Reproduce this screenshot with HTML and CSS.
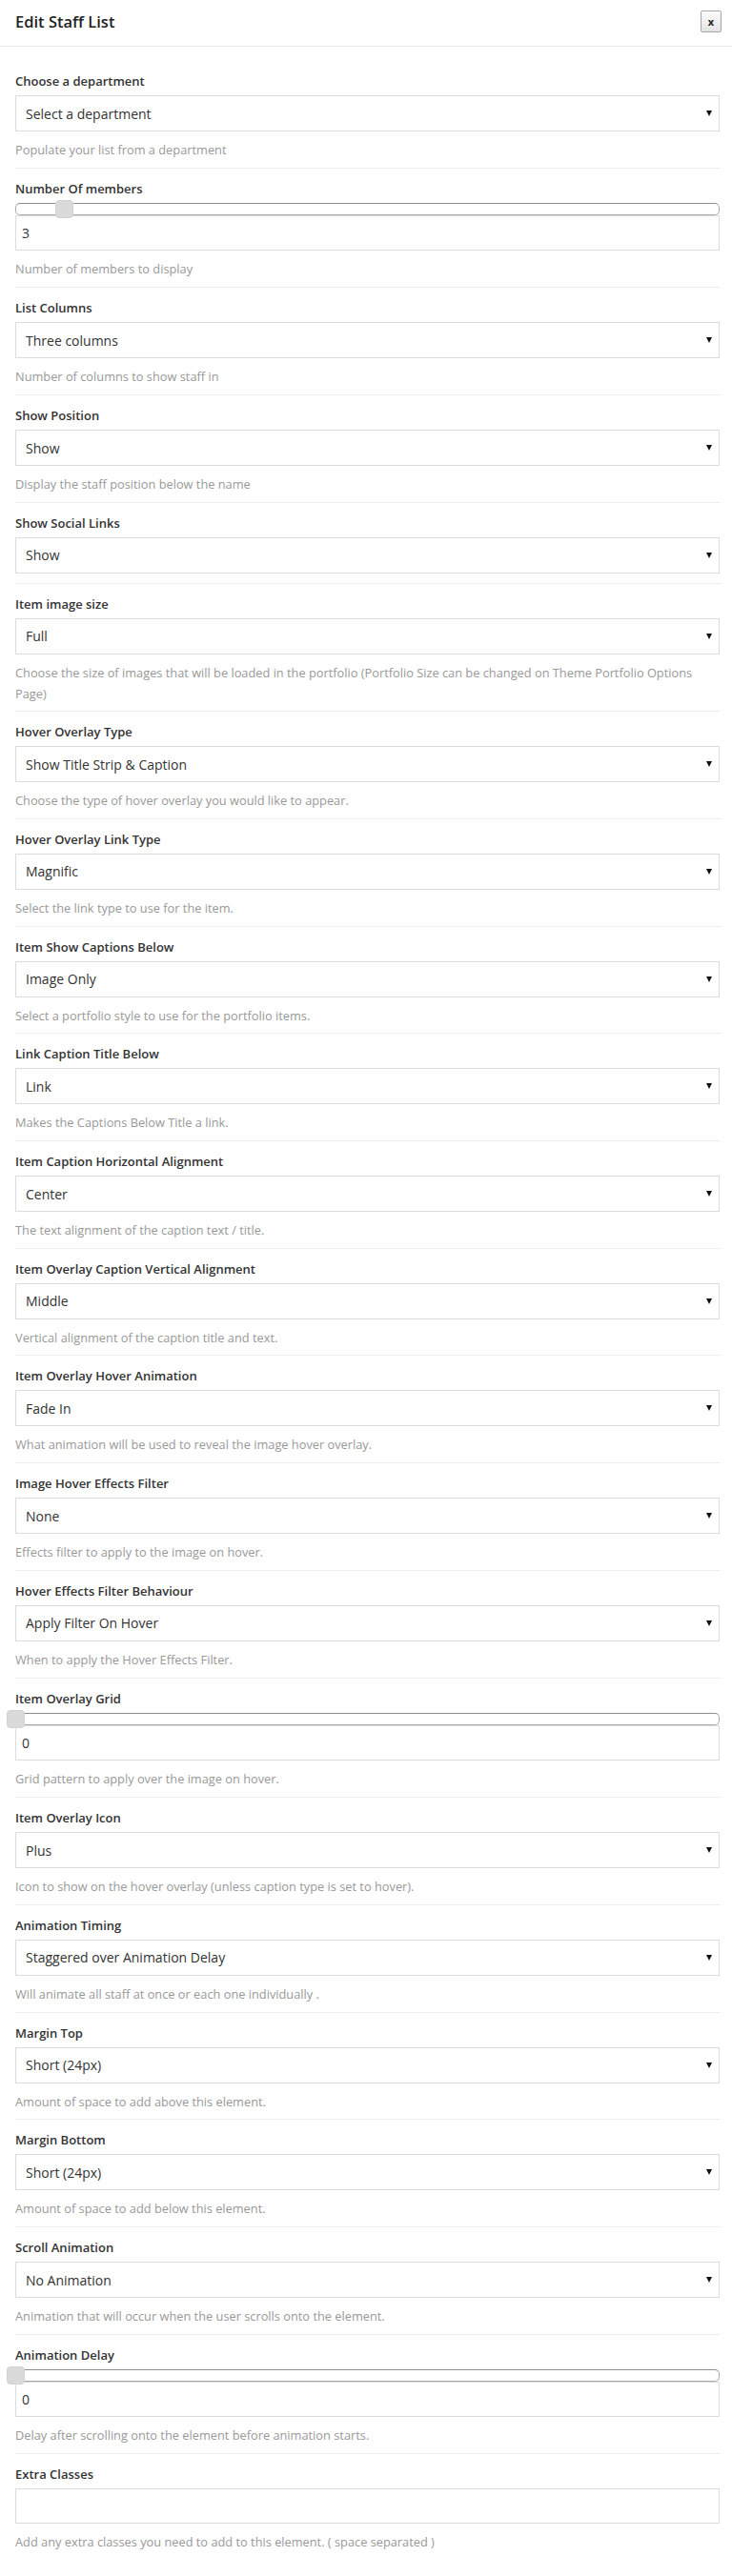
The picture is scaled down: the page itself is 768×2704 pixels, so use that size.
FILE: index.html
```html
<!DOCTYPE html>
<html lang="en">
<head>
<meta charset="utf-8">
<title>Edit Staff List</title>
<link rel="stylesheet" href="styles.css">
</head>
<body>
<div class="modal">
  <div class="modal-header">
    <h1 class="modal-title">Edit Staff List</h1>
    <button class="close-btn" type="button">x</button>
  </div>
  <form class="modal-body">
    <div class="field">
      <label class="field-label">Choose a department</label>
      <div class="select-wrap"><select class="select"><option>Select a department</option></select></div>
      <p class="help">Populate your list from a department</p>
    </div>
    <div class="field field-slider">
      <label class="field-label">Number Of members</label>
      <div class="slider"><span class="slider-thumb" style="left: 6.9%"></span></div>
      <input class="text-input" type="text" value="3">
      <p class="help">Number of members to display</p>
    </div>
    <div class="field">
      <label class="field-label">List Columns</label>
      <div class="select-wrap"><select class="select"><option>Three columns</option></select></div>
      <p class="help">Number of columns to show staff in</p>
    </div>
    <div class="field">
      <label class="field-label">Show Position</label>
      <div class="select-wrap"><select class="select"><option>Show</option></select></div>
      <p class="help">Display the staff position below the name</p>
    </div>
    <div class="field field-nohelp">
      <label class="field-label">Show Social Links</label>
      <div class="select-wrap"><select class="select"><option>Show</option></select></div>
    </div>
    <div class="field">
      <label class="field-label">Item image size</label>
      <div class="select-wrap"><select class="select"><option>Full</option></select></div>
      <p class="help">Choose the size of images that will be loaded in the portfolio (Portfolio Size can be changed on Theme Portfolio Options Page)</p>
    </div>
    <div class="field">
      <label class="field-label">Hover Overlay Type</label>
      <div class="select-wrap"><select class="select"><option>Show Title Strip &amp; Caption</option></select></div>
      <p class="help">Choose the type of hover overlay you would like to appear.</p>
    </div>
    <div class="field">
      <label class="field-label">Hover Overlay Link Type</label>
      <div class="select-wrap"><select class="select"><option>Magnific</option></select></div>
      <p class="help">Select the link type to use for the item.</p>
    </div>
    <div class="field">
      <label class="field-label">Item Show Captions Below</label>
      <div class="select-wrap"><select class="select"><option>Image Only</option></select></div>
      <p class="help">Select a portfolio style to use for the portfolio items.</p>
    </div>
    <div class="field">
      <label class="field-label">Link Caption Title Below</label>
      <div class="select-wrap"><select class="select"><option>Link</option></select></div>
      <p class="help">Makes the Captions Below Title a link.</p>
    </div>
    <div class="field">
      <label class="field-label">Item Caption Horizontal Alignment</label>
      <div class="select-wrap"><select class="select"><option>Center</option></select></div>
      <p class="help">The text alignment of the caption text / title.</p>
    </div>
    <div class="field">
      <label class="field-label">Item Overlay Caption Vertical Alignment</label>
      <div class="select-wrap"><select class="select"><option>Middle</option></select></div>
      <p class="help">Vertical alignment of the caption title and text.</p>
    </div>
    <div class="field">
      <label class="field-label">Item Overlay Hover Animation</label>
      <div class="select-wrap"><select class="select"><option>Fade In</option></select></div>
      <p class="help">What animation will be used to reveal the image hover overlay.</p>
    </div>
    <div class="field">
      <label class="field-label">Image Hover Effects Filter</label>
      <div class="select-wrap"><select class="select"><option>None</option></select></div>
      <p class="help">Effects filter to apply to the image on hover.</p>
    </div>
    <div class="field">
      <label class="field-label">Hover Effects Filter Behaviour</label>
      <div class="select-wrap"><select class="select"><option>Apply Filter On Hover</option></select></div>
      <p class="help">When to apply the Hover Effects Filter.</p>
    </div>
    <div class="field field-slider">
      <label class="field-label">Item Overlay Grid</label>
      <div class="slider"><span class="slider-thumb" style="left: 0%"></span></div>
      <input class="text-input" type="text" value="0">
      <p class="help">Grid pattern to apply over the image on hover.</p>
    </div>
    <div class="field">
      <label class="field-label">Item Overlay Icon</label>
      <div class="select-wrap"><select class="select"><option>Plus</option></select></div>
      <p class="help">Icon to show on the hover overlay (unless caption type is set to hover).</p>
    </div>
    <div class="field">
      <label class="field-label">Animation Timing</label>
      <div class="select-wrap"><select class="select"><option>Staggered over Animation Delay</option></select></div>
      <p class="help">Will animate all staff at once or each one individually .</p>
    </div>
    <div class="field">
      <label class="field-label">Margin Top</label>
      <div class="select-wrap"><select class="select"><option>Short (24px)</option></select></div>
      <p class="help">Amount of space to add above this element.</p>
    </div>
    <div class="field">
      <label class="field-label">Margin Bottom</label>
      <div class="select-wrap"><select class="select"><option>Short (24px)</option></select></div>
      <p class="help">Amount of space to add below this element.</p>
    </div>
    <div class="field">
      <label class="field-label">Scroll Animation</label>
      <div class="select-wrap"><select class="select"><option>No Animation</option></select></div>
      <p class="help">Animation that will occur when the user scrolls onto the element.</p>
    </div>
    <div class="field field-slider">
      <label class="field-label">Animation Delay</label>
      <div class="slider"><span class="slider-thumb" style="left: 0%"></span></div>
      <input class="text-input" type="text" value="0">
      <p class="help">Delay after scrolling onto the element before animation starts.</p>
    </div>
    <div class="field field-last">
      <label class="field-label">Extra Classes</label>
      <input class="text-input" type="text" value="">
      <p class="help">Add any extra classes you need to add to this element. ( space separated )</p>
    </div>
  </form>
</div>
</body>
</html>
```

FILE: styles.css
```css
* { box-sizing: border-box; }

html, body {
  margin: 0;
  padding: 0;
  background: #fff;
}

body {
  font-family: "Open Sans", "Liberation Sans", sans-serif;
  color: #333;
}

.modal {
  width: 768px;
  background: #fff;
}

.modal-header {
  height: 49px;
  border-bottom: 1px solid #e8e8e8;
  display: flex;
  justify-content: space-between;
  align-items: flex-start;
  padding: 0 11px 0 16px;
}

.modal-title {
  margin: 0;
  padding-top: 12px;
  font-size: 16.5px;
  font-weight: 600;
  line-height: 22px;
  color: #222;
}

.close-btn {
  margin-top: 11px;
  width: 22px;
  height: 23px;
  padding: 0;
  border: 1px solid #a6a6a6;
  border-radius: 2px;
  background: linear-gradient(#fbfbfb, #e4e4e4);
  font-family: "Open Sans", "Liberation Sans", sans-serif;
  font-size: 11px;
  font-weight: 700;
  line-height: 19px;
  color: #222;
}

.modal-body {
  display: block;
  margin: 0;
  padding: 15px 13px 0 16px;
}

.field {
  padding: 11px 0 7px;
  border-bottom: 1px dotted #e0e0e0;
}

.field-slider {
  padding-bottom: 8px;
}

.field-nohelp {
  padding-bottom: 10px;
}

.field-last {
  border-bottom: 0;
}

.field-label {
  display: block;
  font-size: 13px;
  font-weight: 600;
  line-height: 20px;
  color: #333;
  margin-bottom: 5px;
}

.select-wrap {
  position: relative;
  height: 38px;
  border: 1px solid #dcdcdc;
  background: #fff;
}

.select-wrap::after {
  content: "";
  position: absolute;
  right: 7px;
  top: 15px;
  border-left: 3px solid transparent;
  border-right: 3px solid transparent;
  border-top: 6px solid #111;
  pointer-events: none;
}

.select {
  -webkit-appearance: none;
  appearance: none;
  display: block;
  width: 100%;
  height: 100%;
  margin: 0;
  padding: 0 24px 0 10px;
  border: 0;
  background: transparent;
  font-family: "Open Sans", "Liberation Sans", sans-serif;
  font-size: 14px;
  color: #333;
  outline: none;
}

.slider {
  position: relative;
  height: 13px;
  border: 1px solid #aaa;
  border-top-color: #8f8f8f;
  border-radius: 5px;
  background: #fff;
}

.slider-thumb {
  position: absolute;
  top: -4px;
  width: 19px;
  height: 19px;
  margin-left: -10px;
  background: #dadada;
  border: 1px solid #d2d2d2;
  border-radius: 4px;
}

.text-input {
  display: block;
  width: 100%;
  height: 37px;
  margin: 0;
  padding: 0 6px;
  border: 1px solid #dcdcdc;
  background: #fff;
  font-family: "Open Sans", "Liberation Sans", sans-serif;
  font-size: 14px;
  color: #333;
  outline: none;
}

.help {
  margin: 9px 0 0;
  font-size: 12.8px;
  line-height: 21.7px;
  color: #999;
}
```
